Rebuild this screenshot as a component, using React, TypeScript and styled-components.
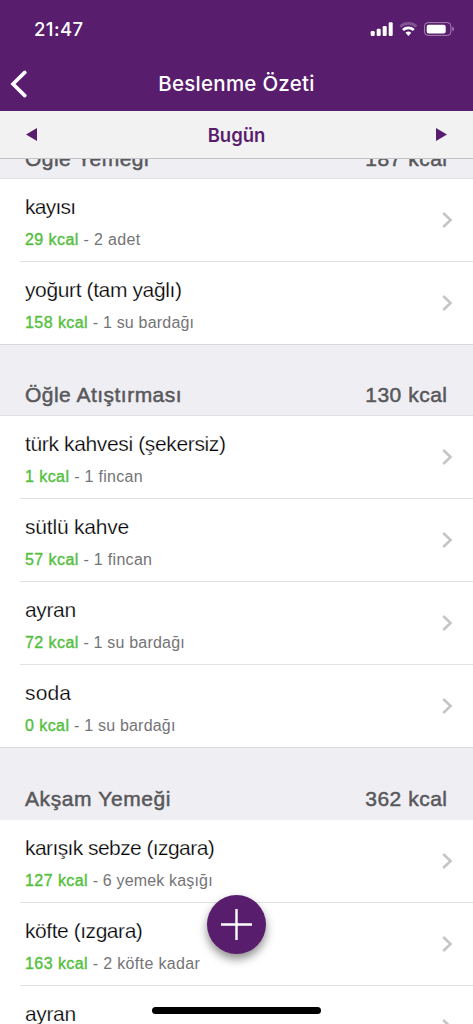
import React from 'react';
import styled, { createGlobalStyle } from 'styled-components';

const GlobalStyle = createGlobalStyle`
  * { box-sizing: border-box; }
  html, body { margin: 0; padding: 0; background: #fff; }
`;

const Screen = styled.div`
  position: relative;
  display: flex;
  flex-direction: column;
  width: 473px;
  height: 1024px;
  overflow: hidden;
  background: #fff;
  font-family: 'Liberation Sans', Arial, sans-serif;
`;

const Header = styled.header`
  flex: none;
  height: 111px;
  background: #591d6e;
  color: #fff;
  font-family: Inter, sans-serif;
`;

const StatusBar = styled.div`
  display: flex;
  align-items: center;
  justify-content: space-between;
  height: 58px;
  padding: 0 18px 0 34px;
`;

const Clock = styled.span`
  font-size: 18.5px;
  font-weight: 500;
  line-height: 24px;
  letter-spacing: 0.4px;
`;

const StatusIcons = styled.svg`
  display: block;
  width: 85px;
  height: 16px;
`;

const NavBar = styled.div`
  display: grid;
  grid-template-columns: 50px 1fr 50px;
  align-items: center;
  height: 51px;
`;

const BackButton = styled.button`
  border: 0;
  padding: 0 0 0 10px;
  background: none;
  svg { display: block; }
`;

const Title = styled.h1`
  margin: 0;
  text-align: center;
  font-size: 20.5px;
  font-weight: 500;
  line-height: 26px;
  letter-spacing: 0.25px;
`;

const DateBar = styled.div`
  flex: none;
  display: flex;
  align-items: center;
  justify-content: space-between;
  height: 48px;
  padding: 0 26px;
  background: #f2f2f2;
  border-bottom: 1px solid #c3c3c5;
  svg { display: block; }
`;

const DateLabel = styled.span`
  font-family: Inter, sans-serif;
  font-size: 18.5px;
  font-weight: 600;
  line-height: 24px;
  color: #591d6e;
`;

const List = styled.main`
  flex: 1;
  min-height: 0;
  display: flex;
  flex-direction: column;
  overflow: hidden;
`;

const SectionHeader = styled.div<{ $clipped?: boolean; $plain?: boolean }>`
  flex: none;
  display: flex;
  align-items: flex-end;
  justify-content: space-between;
  height: ${(p) => (p.$plain ? '72px' : '71px')};
  margin-top: ${(p) => (p.$clipped ? '-51px' : '0')};
  padding: 0 25.5px ${(p) => (p.$clipped ? '7px' : '8px')} 25px;
  background: #efeef3;
  border-bottom: 1px solid ${(p) => (p.$plain ? '#efeef3' : '#e2e2e5')};
  color: #58585b;
  font-size: 21px;
  line-height: 25px;
  -webkit-text-stroke: 0.5px #58585b;
`;

const Tracked = styled.span<{ $track?: number }>`
  letter-spacing: ${(p) => p.$track ?? 0}px;
  white-space: nowrap;
`;

const Rows = styled.div`
  flex: none;
  border-bottom: 1px solid #dadadc;
`;

const Row = styled.div`
  display: flex;
  justify-content: space-between;
  height: 83px;
  margin-left: 20px;
  padding: 14px 20px 0 5px;
  border-bottom: 1px solid #e2e2e3;
  &:last-child { height: 82px; border-bottom: 0; }
  svg { flex: none; display: block; margin-top: 18px; }
`;

const Name = styled.div`
  font-size: 21px;
  line-height: 27px;
  color: #000;
  -webkit-text-stroke: 0.25px #fff;
`;

const Detail = styled.div`
  margin-top: 10px;
  font-size: 16px;
  line-height: 20px;
  color: #747476;
`;

const Calories = styled.span`
  color: #55bf3f;
  letter-spacing: 0.43px;
  -webkit-text-stroke: 0.4px #55bf3f;
`;

const AddButton = styled.button`
  position: absolute;
  left: 207px;
  top: 895px;
  display: grid;
  place-items: center;
  width: 59px;
  height: 59px;
  padding: 0;
  border: 0;
  border-radius: 50%;
  background: #591d6e;
  box-shadow: 0 5px 10px rgba(0, 0, 0, 0.45);
`;

const HomeIndicator = styled.div`
  position: absolute;
  left: 152px;
  top: 1007px;
  width: 169px;
  height: 7px;
  border-radius: 4px;
  background: #000;
`;

const Chevron = () => (
  <svg width="12" height="18" viewBox="0 0 12 18" fill="none">
    <path d="M2.2 2 9.6 9l-7.4 7" stroke="#c5c5c9" strokeWidth="2.5" />
  </svg>
);

type Food = { name: string; kcal: number; portion: string; track: number; sub: number };
type Meal = { title: string; kcal: number; track: number; foods: Food[] };

const meals: Meal[] = [
  {
    title: 'Öğle Yemeği',
    kcal: 187,
    track: 0.45,
    foods: [
      { name: 'kayısı', kcal: 29, portion: '2 adet', track: -0.75, sub: 0.35 },
      { name: 'yoğurt (tam yağlı)', kcal: 158, portion: '1 su bardağı', track: -0.38, sub: 0.2 },
    ],
  },
  {
    title: 'Öğle Atıştırması',
    kcal: 130,
    track: 0.48,
    foods: [
      { name: 'türk kahvesi (şekersiz)', kcal: 1, portion: '1 fincan', track: -0.36, sub: 0.3 },
      { name: 'sütlü kahve', kcal: 57, portion: '1 fincan', track: -0.2, sub: 0.3 },
      { name: 'ayran', kcal: 72, portion: '1 su bardağı', track: -0.35, sub: 0.2 },
      { name: 'soda', kcal: 0, portion: '1 su bardağı', track: 0.15, sub: 0.2 },
    ],
  },
  {
    title: 'Akşam Yemeği',
    kcal: 362,
    track: 0.6,
    foods: [
      { name: 'karışık sebze (ızgara)', kcal: 127, portion: '6 yemek kaşığı', track: -0.58, sub: 0.17 },
      { name: 'köfte (ızgara)', kcal: 163, portion: '2 köfte kadar', track: -0.45, sub: 0.33 },
      { name: 'ayran', kcal: 72, portion: '1 su bardağı', track: -0.35, sub: 0.2 },
    ],
  },
];

export default function App() {
  return (
    <Screen>
      <GlobalStyle />
      <Header>
        <StatusBar>
          <Clock>21:47</Clock>
          <StatusIcons viewBox="0 0 85 16" fill="none">
            <g fill="#fff">
              <rect x="0.7" y="10" width="4" height="5" rx="1.2" />
              <rect x="6.7" y="7.7" width="4" height="7.3" rx="1.2" />
              <rect x="12.7" y="5" width="4" height="10" rx="1.2" />
              <rect x="18.7" y="1.3" width="4" height="13.7" rx="1.2" />
            </g>
            <path d="M30.3 5.5a12.2 12.2 0 0 1 16.2 0" stroke="#fff" strokeOpacity=".25" strokeWidth="2.8" />
            <path d="M33 9a8 8 0 0 1 10.8 0" stroke="#fff" strokeWidth="2.7" />
            <path d="M35.5 11.8a4.2 4.2 0 0 1 5.8 0L38.4 15z" fill="#fff" />
            <rect x="54.5" y="1.6" width="26.4" height="12.8" rx="3.6" stroke="#fff" strokeOpacity=".45" />
            <rect x="56.7" y="3.7" width="19" height="8.8" rx="2" fill="#fff" />
            <path d="M82.4 5.8c2 .7 2 3.7 0 4.4z" fill="#fff" fillOpacity=".5" />
          </StatusIcons>
        </StatusBar>
        <NavBar>
          <BackButton aria-label="Geri">
            <svg width="18" height="28" viewBox="0 0 18 28" fill="none">
              <path d="M14.8 2.4 3 14l11.8 11.6" stroke="#fff" strokeWidth="3.6" strokeLinecap="round" />
            </svg>
          </BackButton>
          <Title>Beslenme Özeti</Title>
        </NavBar>
      </Header>
      <DateBar>
        <svg width="11" height="13" viewBox="0 0 11 13"><path d="M11 0v13L0 6.5z" fill="#591d6e" /></svg>
        <DateLabel>Bugün</DateLabel>
        <svg width="11" height="13" viewBox="0 0 11 13"><path d="M0 0v13l11-6.5z" fill="#591d6e" /></svg>
      </DateBar>
      <List>
        {meals.map((meal, i) => (
          <React.Fragment key={meal.title}>
            <SectionHeader $clipped={i === 0} $plain={i === 2}>
              <Tracked $track={meal.track}>{meal.title}</Tracked>
              <Tracked $track={0.5}>{meal.kcal} kcal</Tracked>
            </SectionHeader>
            <Rows>
              {meal.foods.map((food) => (
                <Row key={food.name}>
                  <div>
                    <Name><Tracked $track={food.track}>{food.name}</Tracked></Name>
                    <Detail>
                      <Tracked $track={food.sub}><Calories>{food.kcal} kcal</Calories> - {food.portion}</Tracked>
                    </Detail>
                  </div>
                  <Chevron />
                </Row>
              ))}
            </Rows>
          </React.Fragment>
        ))}
      </List>
      <AddButton aria-label="Ekle">
        <svg width="31" height="31" viewBox="0 0 31 31" fill="none">
          <path d="M15.5 0v31M0 15.5h31" stroke="#fff" strokeWidth="2.4" />
        </svg>
      </AddButton>
      <HomeIndicator />
    </Screen>
  );
}
